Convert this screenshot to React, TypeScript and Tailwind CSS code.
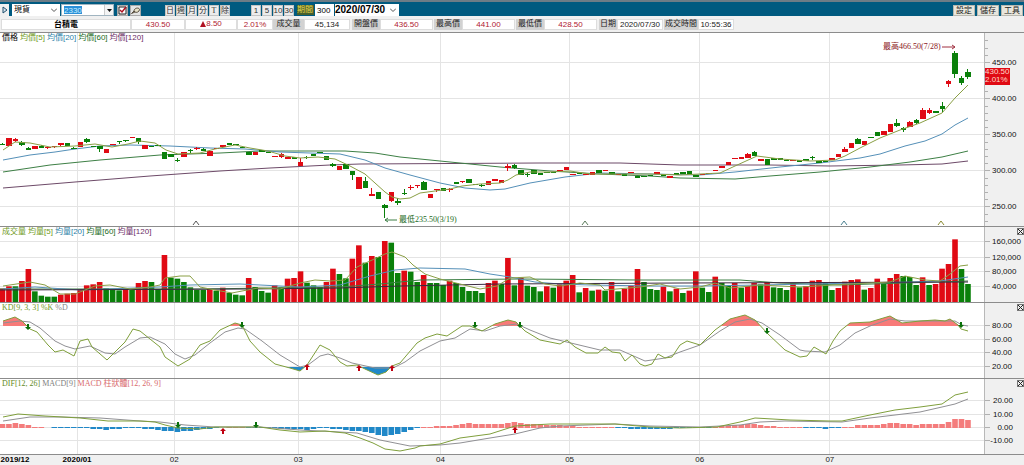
import React from 'react';

const PLOT_WIDTH = 984;
const SERIF = "font-['Liberation_Serif','Noto_Sans_CJK_TC',serif]";
const SANS = "font-['Liberation_Sans','Noto_Sans_CJK_TC',sans-serif]";

const MONTHS = [
  { x: 15, label: '2019/12', year: true, grid: false },
  { x: 77, label: '2020/01', year: true, grid: true },
  { x: 174, label: '02', year: false, grid: true },
  { x: 298, label: '03', year: false, grid: true },
  { x: 440, label: '04', year: false, grid: true },
  { x: 569, label: '05', year: false, grid: true },
  { x: 699, label: '06', year: false, grid: true },
  { x: 829, label: '07', year: false, grid: true },
];

// r = up, g = down, then body top, body bottom and optionally wick top, wick bottom
const CANDLES = `
g144,145,143,145 r138,146 r139,141,138,142 g142,145,141,146 g148,150,147,150 r146,149 g146,148,145,148 r147,148,146,149 r146,147,146,148 r143,145,143,146
g143,146 g148,149,147,149 r142,147 g139,142,138,143 g146,147 g146,149,146,152 r149,153 r144,145 g141,142,141,144 g140,141,140,142
r137,138 g138,142,138,144 r145,149 g146,147 g145,146 g152,159 g154,157 g160,161,158,162 r152,157 g150,151,149,153
r148,149,147,150 g149,151,148,151 r151,156 r148,149 r145,147 g143,145 g144,145 g147,148 g152,155 r152,155
g150,152 g152,153 r156,157 r154,157,153,158 r157,159 g157,159 r162,166,158,166 g157,158,156,159 g154,156 g152,153
g156,160 g164,166,163,167 r166,170 g164,169 g171,175,171,180 r177,189 g181,188,177,188 r194,196,188,196 g192,199 g205,208,204,218
r192,201,192,202 g201,203,198,205 g193,194,189,195 r187,188,185,190 r185,186,185,188 g182,190,181,190 r194,198 r189,190,189,192 g188,191 r189,190,188,192
g182,184 r181,182,181,183 g179,183 g184,185 g185,186,184,187 r181,185 r179,181 r180,183 r166,168,164,171 g165,168,164,169
g170,175 g174,175,173,177 g170,174 g173,175 g172,173 g172,173 r170,171 r167,170 r174,175 g173,174
r174,175 r172,175 g170,173 r170,171 g172,174 r174,175 g174,176 r172,173 g176,178 g176,177
g175,176 r172,174 g174,176 r176,178 g173,175 g172,174 g171,175 g175,177 r174,175 r173,174
r170,171 r166,168 r162,165 r158,159 r157,159 r154,158,153,158 g152,156,151,156 r159,161 g159,165 g158,160
g158,160 g160,161 r160,161 g160,162 g159,161 g157,158,156,160 g161,163 g161,162 r158,160 r154,157
r149,152,147,152 r143,148 g139,144,138,144 r141,145 g137,138 g132,136 r131,135 r124,132 g123,126,119,127 g128,130,127,132
r122,127,121,127 g120,123,119,124 r110,119,108,119 r110,113,108,114 g111,113 g106,109,102,112 r81,84,80,87 g53,74,51,78 g78,83,76,85 g72,77,69,79
`;

// bar heights, one unit is about 890 lots
const VOLUMES = `
r40 r47 g47 r63 r99 g32 g19 g16 g16 r22 r25 r27 r39 r50 r53 r60 g41 g36 g35 r39
g37 r57 r63 g60 g39 r141 g73 g70 g60 g44 g36 g36 r39 g34 r43 g27 g22 g20 r72 g45
g33 g28 r50 g44 r70 r72 r92 g58 g50 g45 r60 r100 g84 g71 r130 r170 g118 r138 g135 r183
g178 g87 r94 g91 g60 r81 g57 g57 g51 r64 g57 g45 g33 g33 g27 r57 r64 g54 r132 g50
r73 g49 g45 g32 r47 g43 r53 r64 r81 g29 r42 g34 r37 g34 r60 g32 r40 r49 r99 g60
g39 g36 r46 g32 r40 g27 r34 r92 g43 g30 r76 g57 g49 r57 g43 r48 r57 g53 r60 g44
g42 g36 r57 g44 r48 r64 r66 g57 g36 r42 r61 r66 r68 g37 r42 r70 g55 r72 r84 g78
g75 g51 r74 g51 r54 r100 r114 r188 g99 g54
`;

const HISTOGRAM = `
4 4 5 4 3 1 1 0 -1 -1 -1 -1 -1 -1 -2 -2 -3 -2 -2 -1 -1 -1 -2 -2 -3 -4 -4 -5 -4 -4
-3 -2 -2 -1 0 1 1 1 -1 -1 -1 -1 -1 -2 -2 -2 -2 -3 -2 -1 -1 -2 -2 -3 -4 -4 -5 -6 -8 -9
-8 -7 -5 -3 -1 1 1 2 2 2 3 4 5 4 4 4 4 4 5 6 5 4 4 4 3 3 3 2 2 1
1 1 1 1 1 -1 -1 -2 -2 -2 -2 -2 -2 -2 -1 -1 -1 -1 -1 -1 1 2 2 3 3 4 4 3 2 2
1 1 1 1 -1 -1 -1 -2 -1 -1 1 1 3 3 3 3 4 5 5 4 4 3 4 4 4 4 6 9 9 8
`;

const MA5 = '3,150 15,142 30,143 50,147 75,146 95,144 112,147 128,144 140,141 155,143 166,150 178,154 200,153 215,149 235,145 250,148 268,151 285,156 300,158 318,157 335,159 350,166 365,174 375,183 385,192 392,197 400,199 410,198 420,193 435,191 450,189 462,186 480,184 500,183 508,180 516,175 530,172 550,172 570,171 590,174 620,174 650,174 680,175 720,173 735,166 757,156 780,159 810,161 835,160 845,156 860,148 880,138 900,130 920,123 942,113 955,98 968,85';
const MA20 = '3,160 30,155 55,152 75,149 100,146 130,145 170,146 210,148 245,149 280,152 310,153 340,154 365,160 385,168 410,175 440,183 465,188 490,190 505,189 530,183 565,177 600,173 650,174 700,175 735,172 780,167 820,163 860,158 880,154 905,146 925,141 942,134 955,125 968,118';
const MA60 = '3,172 50,165 100,160 160,155 220,153 260,151 300,151 345,151 375,153 400,157 450,162 500,167 550,171 600,174 650,176 680,178 735,179 770,176 820,172 870,167 910,162 942,157 968,151';
const MA120 = '3,188 75,182 150,176 220,171 270,168 330,165 360,164 540,163 620,163 680,165 770,165 830,166 900,165 942,164 968,161';

const VOL5 = '3,286 30,282 45,285 60,294 75,294 95,286 110,285 130,289 150,287 160,285 165,278 180,276 190,276 200,287 215,290 232,293 242,291 258,288 280,289 300,283 315,280 330,281 345,280 357,267 370,261 385,254 392,252 405,257 413,265 425,274 440,279 460,284 480,289 497,286 510,278 530,277 545,284 560,286 580,283 600,285 605,290 640,287 660,284 680,289 700,287 715,283 730,288 760,285 800,287 850,284 890,282 905,276 925,280 940,281 950,274 960,266 968,265';
const VOL20 = '3,289 35,287 80,290 160,287 190,285 240,284 300,287 340,285 370,276 395,270 420,268 465,269 490,274 510,277 535,282 560,284 590,285 650,286 700,286 760,285 860,283 910,282 940,281 968,277';
const VOL60 = '0,289 200,289 340,287 380,284 420,280 520,279 640,280 740,280 780,283 840,285 968,281';
const VOL120 = '0,290 250,289 340,288 400,286 500,284 680,283 968,282';

const K_LINE = '3,321 15,317 22,321 30,329 37,332 48,345 55,352 63,350 74,356 80,341 88,339 92,347 107,360 125,342 133,329 140,331 150,339 160,347 165,357 178,366 190,359 200,345 210,341 220,330 235,323 242,325 250,341 260,352 275,364 290,368 300,371 307,365 320,345 330,350 340,362 347,366 357,365 365,369 378,375 386,372 392,366 400,363 417,343 425,338 437,334 447,336 462,326 470,326 482,331 495,324 508,320 516,322 525,331 540,340 560,344 567,340 575,347 586,353 598,353 605,347 612,352 620,353 625,361 632,355 640,364 645,366 652,364 658,354 665,358 672,357 680,345 687,341 700,345 715,330 730,319 745,315 755,320 768,334 785,350 800,357 807,356 814,347 826,354 833,341 840,331 850,323 870,322 880,319 890,316 902,323 920,321 935,320 945,321 950,319 958,325 961,329 968,331';
const D_LINE = '3,323 20,321 30,322 40,328 55,341 65,346 75,349 90,346 105,353 115,354 125,347 140,338 150,337 165,344 175,354 185,359 195,355 210,343 225,332 238,328 245,329 262,341 280,355 300,367 308,365 320,356 328,354 340,358 352,363 375,368 393,368 405,362 420,351 440,341 455,338 470,329 485,331 500,326 517,324 530,330 550,338 575,344 600,350 620,350 645,361 665,358 680,352 700,345 720,331 735,322 750,319 762,323 780,335 800,350 805,351 825,352 840,345 855,333 870,326 890,319 905,321 940,321 955,321 962,325 968,326';

const DIF_LINE = '3,417 18,414 45,416 80,418 108,421 140,421 155,422 165,425 178,428 200,429 215,427 260,427 280,430 300,432 325,431 345,433 360,438 373,443 385,449 400,451 415,448 420,446 440,444 460,438 490,434 515,426 550,424 615,424 650,427 680,428 717,427 740,422 755,418 790,420 830,421 842,421 870,415 895,410 920,407 942,404 955,395 968,392';
const MACD_LINE = '3,421 30,417 60,417 100,418 140,421 160,422 185,425 215,427 260,427 300,430 340,432 357,433 380,440 410,446 440,445 460,443 490,438 515,434 540,428 560,426 615,424 650,426 700,427 740,425 760,422 785,421 842,422 870,418 895,415 920,412 942,407 955,404 968,399';

const barX = (i: number) => 2.4 + 6.48 * i;

const parseBars = (text: string) =>
  text.trim().split(/\s+/).map((token) => ({
    color: token[0] === 'r' ? '#e00a14' : '#0a800a',
    values: token.slice(1).split(',').map(Number),
  }));

const Line: React.FC<{ points: string; color: string }> = ({ points, color }) => (
  <polyline points={points} fill="none" stroke={color} strokeWidth="1" vectorEffect="non-scaling-stroke" />
);

const Signal: React.FC<{ x: number; y: number; up?: boolean }> = ({ x, y, up }) => (
  <path
    d={up ? 'M0 -3L3 0H1V3H-1V0H-3Z' : 'M0 3L3 0H1V-3H-1V0H-3Z'}
    transform={`translate(${x} ${y})`}
    fill={up ? '#c00010' : '#0a700a'}
  />
);

interface Tick {
  y: number;
  label: string;
}

interface PanelProps {
  top: number;
  height: number;
  className: string;
  legendFont: string;
  ticks: Tick[];
  minor?: number[];
  labelEnd?: number;
  legend: { text: string; color: string }[];
  closable?: boolean;
  tag?: React.ReactNode;
  overlay?: React.ReactNode;
  children: React.ReactNode;
}

const Panel: React.FC<PanelProps> = ({ top, height, className, legendFont, ticks, minor = [], labelEnd, legend, closable, tag, overlay, children }) => (
  <section className={`flex border-b border-[#8c8c8c] ${className}`}>
    <div className="relative flex-1 min-w-0 bg-white border-r border-[#b8b8b8]">
      <svg className="block w-full h-full" viewBox={`0 ${top} ${PLOT_WIDTH} ${height}`} preserveAspectRatio="none">
        <g stroke="#e4e4e4" shapeRendering="crispEdges">
          {MONTHS.filter((m) => m.grid).map((m) => (
            <line key={m.x} x1={m.x} x2={m.x} y1={top} y2={top + height} />
          ))}
          {ticks.map((t) => (
            <line key={t.y} x1="0" x2={PLOT_WIDTH} y1={t.y} y2={t.y} />
          ))}
        </g>
        {children}
      </svg>
      <div className={`absolute left-[2px] top-0 flex gap-[2px] text-[8px] leading-[10px] whitespace-nowrap ${legendFont}`}>
        {legend.map((item) => (
          <span key={item.text} className={item.color}>{item.text}</span>
        ))}
      </div>
      {overlay}
    </div>
    <div className="relative w-[39px] shrink-0">
      <svg className="block w-full h-full" viewBox={`0 ${top} 39 ${height}`}>
        <g stroke="#b0b0b0" shapeRendering="crispEdges">
          {minor.map((y) => <line key={y} x1="0" x2="3" y1={y} y2={y} />)}
          {ticks.map((t) => <line key={t.y} x1="0" x2="5" y1={t.y} y2={t.y} />)}
        </g>
        {ticks.map((t) => (
          <text
            key={t.y}
            x={labelEnd ?? 7}
            y={t.y + 3}
            textAnchor={labelEnd ? 'end' : 'start'}
            className={`text-[8px] fill-[#111111] ${SANS}`}
          >
            {t.label}
          </text>
        ))}
      </svg>
      {tag}
      {closable && (
        <button type="button" aria-label="關閉" className="absolute right-0 top-px size-[7px] border border-[#777777]">
          <svg viewBox="0 0 5 5" className="block size-full">
            <path d="M0 0L5 5M5 0L0 5" stroke="#222222" strokeWidth="1" />
          </svg>
        </button>
      )}
    </div>
  </section>
);

const ToolButton: React.FC<{ children: React.ReactNode }> = ({ children }) => (
  <button type="button" className="w-[10px] h-[11px] bg-[#ececec] border border-[#c4c4c4] text-[8px] leading-[9px] text-[#333333] flex items-center justify-center">
    {children}
  </button>
);

const Toolbar: React.FC = () => (
  <header className="flex items-center h-4 pt-[2px] pr-px border-t-2 border-[#6d7c86] bg-[#005a80] text-[8px] leading-[10px] whitespace-nowrap">
    <button type="button" aria-label="展開" className="w-[9px] h-3 bg-[#f0f0f0] flex items-center justify-center">
      <svg viewBox="0 0 6 8" className="w-[6px] h-2">
        <path d="M1 1L5 4L1 7Z" fill="#dbe6ee" stroke="#20506e" />
      </svg>
    </button>
    <div className="relative ml-[3px]">
      <select aria-label="商品類別" className="block appearance-none w-12 h-3 pl-[2px] bg-white text-black">
        <option>現貨</option>
      </select>
      <svg viewBox="0 0 6 4" className="absolute right-[3px] top-1 w-[6px] h-1 pointer-events-none">
        <path d="M0 0.500L3 3.500L6 0.500" fill="none" stroke="#555555" />
      </svg>
    </div>
    <div className="ml-px flex items-center w-[53px] h-3 bg-white border border-[#a0b4c0] pl-[2px]">
      <input aria-label="股票代號" defaultValue="2330" className="w-[18px] h-2 bg-[#2a8fd8] text-[#c8f0ff] text-[8px] leading-[8px]" />
      <button type="button" aria-label="選擇股票" className="ml-auto w-[9px] h-[10px] bg-[#f4f4f4] border-l border-[#cccccc] flex items-center justify-center">
        <svg viewBox="0 0 5 3" className="w-[5px] h-[3px]"><path d="M0 0H5L2.500 3Z" fill="#111111" /></svg>
      </button>
    </div>
    <div className="ml-[3px] flex gap-[2px]">
      <button type="button" aria-label="畫線" className="w-[11px] h-[11px] bg-[#e4e4e4] border border-[#aaaaaa]">
        <svg viewBox="0 0 9 9" className="block size-full">
          <path d="M1 1H8V8H1Z" fill="#ffffff" stroke="#222222" />
          <path d="M2 4L4 6L8 1" fill="none" stroke="#b01020" strokeWidth="1.500" />
        </svg>
      </button>
      <button type="button" aria-label="橡皮擦" className="w-[11px] h-[11px] bg-[#e4e4e4] border border-[#aaaaaa]">
        <svg viewBox="0 0 9 9" className="block size-full">
          <path d="M3 5C3 2 8 1 8.500 3.500C8.500 6 5 7 4 6ZM3 5L0.500 7.500L4 6" fill="#e8e2c8" stroke="#4a4030" strokeWidth="0.900" />
        </svg>
      </button>
    </div>
    <div className={`ml-6 flex gap-px ${SERIF}`}>
      {['日', '週', '月', '分', 'T', '除'].map((name) => (
        <ToolButton key={name}>{name}</ToolButton>
      ))}
    </div>
    <div className={`ml-[21px] flex gap-px ${SANS}`}>
      {['1', '5', '10', '30'].map((name) => (
        <ToolButton key={name}>{name}</ToolButton>
      ))}
    </div>
    <label htmlFor="period" className="ml-[3px] w-[17px] bg-[#48602c] text-[#e8d84a]">期間</label>
    <input id="period" defaultValue="300" className={`ml-px w-[19px] h-3 pl-[2px] bg-white text-black text-[8px] ${SANS}`} />
    <div className="relative ml-px">
      <select aria-label="查詢日期" className="block appearance-none w-16 h-3 bg-white text-black font-bold text-[10px] leading-3 font-['Liberation_Sans',sans-serif]">
        <option>2020/07/30</option>
      </select>
      <svg viewBox="0 0 6 4" className="absolute right-[3px] top-1 w-[6px] h-1 pointer-events-none">
        <path d="M0 0.500L3 3.500L6 0.500" fill="none" stroke="#555555" />
      </svg>
    </div>
    <div className="ml-auto flex gap-[2px]">
      {['設定', '儲存', '工具'].map((name) => (
        <button key={name} type="button" className="w-[22px] h-[11px] bg-[#e8e6dc] border border-[#b8b8b0] text-[8px] leading-[9px] text-[#222222]">
          {name}
        </button>
      ))}
    </div>
  </header>
);

const cell = 'h-[11px] bg-white border border-[#dddddd] text-center';
const caption = 'h-[11px] bg-[#d2d2d2] text-center';

const QuoteBar: React.FC = () => (
  <div className={`flex items-center h-4 pl-px bg-[#f0f0f0] text-[8px] leading-[10px] whitespace-nowrap text-[#222222] ${SANS}`}>
    <div className={`${cell} w-[130px] font-bold text-black`}>台積電</div>
    <div className={`${cell} w-[54px] text-[#b02030]`}>430.50</div>
    <div className={`${cell} w-[52px] text-[#b02030] flex items-center justify-center`}>
      <svg viewBox="0 0 6 6" className="size-[6px]"><path d="M3 0L6 6H0Z" fill="#b01020" /></svg>
      8.50
    </div>
    <div className={`${cell} w-9 text-[#b02030]`}>2.01%</div>
    <div className={`${caption} w-[31px]`}>成交量</div>
    <div className={`${cell} w-[46px]`}>45,134</div>
    <div className={`${caption} ml-[2px] w-7`}>開盤價</div>
    <div className={`${cell} w-[53px] text-[#b02030]`}>436.50</div>
    <div className={`${caption} ml-px w-7`}>最高價</div>
    <div className={`${cell} w-[53px] text-[#b02030]`}>441.00</div>
    <div className={`${caption} ml-px w-7`}>最低價</div>
    <div className={`${cell} w-[53px] text-[#b02030]`}>428.50</div>
    <div className={`${caption} ml-[2px] w-[18px]`}>日期</div>
    <div className={`${cell} w-[46px]`}>2020/07/30</div>
    <div className={`${caption} ml-px w-[34px]`}>成交時間</div>
    <div className={`${cell} w-9`}>10:55:36</div>
  </div>
);

const minorPriceTicks = [40, 48, 55, 70, 77, 84, 91, 106, 113, 120, 127, 142, 149, 156, 163, 178, 185, 192, 199, 214, 221];

const PriceChart: React.FC = () => (
  <Panel
    top={33}
    height={193}
    className="h-[195px] border-t"
    legendFont={SANS}
    minor={minorPriceTicks}
    ticks={[
      { y: 62, label: '450.00' },
      { y: 98, label: '400.00' },
      { y: 134, label: '350.00' },
      { y: 170, label: '300.00' },
      { y: 206, label: '250.00' },
    ]}
    legend={[
      { text: '價格', color: 'text-black' },
      { text: '均價[5]', color: 'text-[#6f9a1c]' },
      { text: '均價[20]', color: 'text-[#2c7fa8]' },
      { text: '均價[60]', color: 'text-[#1a6a22]' },
      { text: '均價[120]', color: 'text-[#6b2d66]' },
    ]}
    tag={
      <div className={`absolute left-0 top-[35px] w-[25px] h-[17px] bg-[#e00a14] text-[8px] leading-[8px] text-[#ffd8c8] ${SANS}`}>
        <div>430.50</div>
        <div>2.01%</div>
      </div>
    }
    overlay={
      <div className={`text-[8px] leading-[10px] whitespace-nowrap ${SERIF}`}>
        <span className="absolute top-[9px] text-[#8a1420]" style={{ left: `${(883 / PLOT_WIDTH) * 100}%` }}>最高466.50(7/28)</span>
        <span className="absolute top-[182px] text-[#1a6a22]" style={{ left: `${(399 / PLOT_WIDTH) * 100}%` }}>最低235.50(3/19)</span>
      </div>
    }
  >
    <Line points={MA120} color="#6d4a68" />
    <Line points={MA60} color="#3d7f45" />
    <Line points={MA20} color="#5590b8" />
    <g shapeRendering="crispEdges">
      {parseBars(CANDLES).map(({ color, values: [open, close, high = open, low = close] }, i) => (
        <g key={i} fill={color}>
          <rect x={barX(i) - 2.5} y={open} width="5.500" height={close - open} />
          <rect x={barX(i) - 0.5} y={high} width="1" height={low - high} />
        </g>
      ))}
    </g>
    <Line points={MA5} color="#8a9f45" />
    <path d="M942 47H955M952 45L955 47L952 49" fill="none" stroke="#a03040" />
    <path d="M397 220H385M388 218L385 220L388 222" fill="none" stroke="#3d7f45" />
    {[[196, '#555555'], [585, '#5a7a5a'], [844, '#4a8090'], [941, '#8a8a30']].map(([x, color]) => (
      <path key={x} d={`M${Number(x) - 3} 225L${x} 221L${Number(x) + 3} 225`} fill="none" stroke={String(color)} />
    ))}
  </Panel>
);

const VolumeChart: React.FC = () => (
  <Panel
    top={227}
    height={75}
    className="h-[76px]"
    legendFont={SANS}
    closable
    ticks={[
      { y: 241, label: '160,000' },
      { y: 257, label: '120,000' },
      { y: 271, label: '80,000' },
      { y: 286, label: '40,000' },
    ]}
    legend={[
      { text: '成交量', color: 'text-[#6f9a1c]' },
      { text: '均量[5]', color: 'text-[#6f9a1c]' },
      { text: '均量[20]', color: 'text-[#2c7fa8]' },
      { text: '均量[60]', color: 'text-[#1a6a22]' },
      { text: '均量[120]', color: 'text-[#6b2d66]' },
    ]}
  >
    {parseBars(VOLUMES).map(({ color, values }, i) => (
      <rect key={i} x={barX(i) - 2.75} y={302 - values[0] / 3} width="5.600" height={values[0] / 3} fill={color} />
    ))}
    <Line points={VOL60} color="#3d7f45" />
    <Line points={VOL20} color="#5590b8" />
    <Line points={VOL120} color="#3a2a40" />
    <Line points={VOL5} color="#8a9f45" />
  </Panel>
);

const KdChart: React.FC = () => (
  <Panel
    top={303}
    height={75}
    className="h-[76px]"
    legendFont={SERIF}
    closable
    ticks={[
      { y: 325, label: '80.00' },
      { y: 339, label: '60.00' },
      { y: 352, label: '40.00' },
      { y: 366, label: '20.00' },
    ]}
    legend={[
      { text: 'KD[9, 3, 3]', color: 'text-[#6f9a1c]' },
      { text: '%K', color: 'text-[#6f9a1c]' },
      { text: '%D', color: 'text-[#888888]' },
    ]}
  >
    <clipPath id="overbought"><rect x="0" y="303" width={PLOT_WIDTH} height="23" /></clipPath>
    <clipPath id="oversold"><rect x="0" y="367" width={PLOT_WIDTH} height="11" /></clipPath>
    <polygon points={`3,326 ${K_LINE} 968,326`} fill="#f87a78" clipPath="url(#overbought)" />
    <polygon points={`3,367 ${K_LINE} 968,367`} fill="#2088c8" clipPath="url(#oversold)" />
    <Line points={D_LINE} color="#909094" />
    <Line points={K_LINE} color="#7f9f3c" />
    {[[28, 327], [242, 325], [475, 325], [520, 325], [767, 331], [961, 325]].map(([x, y]) => (
      <Signal key={x} x={x} y={y} />
    ))}
    {[[307, 367], [359, 368], [392, 368]].map(([x, y]) => (
      <Signal key={x} x={x} y={y} up />
    ))}
  </Panel>
);

const MacdChart: React.FC = () => (
  <Panel
    top={379}
    height={75}
    className="h-[76px]"
    legendFont={SERIF}
    closable
    labelEnd={28}
    ticks={[
      { y: 400, label: '20.00' },
      { y: 414, label: '10.00' },
      { y: 427, label: '0.00' },
      { y: 440, label: '-10.00' },
    ]}
    legend={[
      { text: 'DIF[12, 26]', color: 'text-[#5f8a1c]' },
      { text: 'MACD[9]', color: 'text-[#808080]' },
      { text: 'MACD 柱狀體[12, 26, 9]', color: 'text-[#d86a6c]' },
    ]}
  >
    {HISTOGRAM.trim().split(/\s+/).map(Number).map((h, i) => (
      <rect
        key={i}
        x={barX(i) - 2.75}
        y={h > 0 ? 428 - h : 427}
        width="5.600"
        height={Math.abs(h)}
        fill={h > 0 ? '#f47c7c' : '#2088c8'}
      />
    ))}
    <Line points={MACD_LINE} color="#909094" />
    <Line points={DIF_LINE} color="#7f9f3c" />
    <Signal x={178} y={425} />
    <Signal x={256} y={425} />
    <Signal x={223} y={431} up />
    <Signal x={515} y={430} up />
  </Panel>
);

const App: React.FC = () => {
  return (
    <main className={`min-h-screen bg-[#f0f0f0] ${SANS}`}>
      <Toolbar />
      <QuoteBar />
      <PriceChart />
      <VolumeChart />
      <KdChart />
      <MacdChart />
      {/* Month axis */}
      <footer className="flex pr-[39px]">
        <div className="relative flex-1 h-[10px] text-[8px] leading-[10px] text-[#222222]">
          {MONTHS.map((m) => (
            <span
              key={m.label}
              className={`absolute top-0 -translate-x-1/2 ${m.year ? 'font-bold text-black' : ''}`}
              style={{ left: `${(m.x / PLOT_WIDTH) * 100}%` }}
            >
              {m.label}
            </span>
          ))}
        </div>
      </footer>
    </main>
  );
};

export default App;
